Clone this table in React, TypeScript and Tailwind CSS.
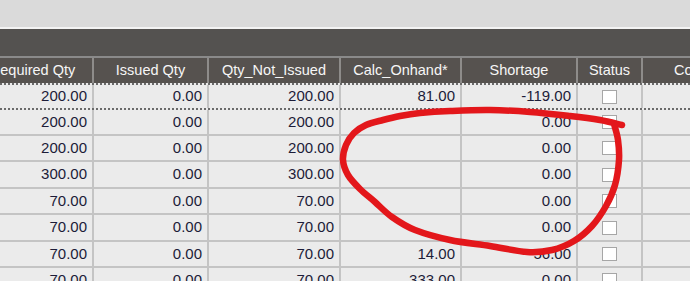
import React from "react";

type Row = {
  h: string;
  req: string;
  iss: string;
  notIss: string;
  calc: string;
  short: string;
  focus?: boolean;
};

const rows: Row[] = [
  { h: "h-[27px]", req: "200.00", iss: "0.00", notIss: "200.00", calc: "81.00", short: "-119.00", focus: true },
  { h: "h-[26px]", req: "200.00", iss: "0.00", notIss: "200.00", calc: "", short: "0.00" },
  { h: "h-[26px]", req: "200.00", iss: "0.00", notIss: "200.00", calc: "", short: "0.00" },
  { h: "h-[27px]", req: "300.00", iss: "0.00", notIss: "300.00", calc: "", short: "0.00" },
  { h: "h-[26px]", req: "70.00", iss: "0.00", notIss: "70.00", calc: "", short: "0.00" },
  { h: "h-[27px]", req: "70.00", iss: "0.00", notIss: "70.00", calc: "", short: "0.00" },
  { h: "h-[26px]", req: "70.00", iss: "0.00", notIss: "70.00", calc: "14.00", short: "56.00" },
  { h: "h-[26px]", req: "70.00", iss: "0.00", notIss: "70.00", calc: "333.00", short: "0.00" },
];

const widths = ["w-[121px]", "w-[115px]", "w-[132px]", "w-[121px]", "w-[116px]", "w-[65px]", "w-[139px]"];

const pts: [number, number][] = [
  [622, 125], [600, 120], [570, 116], [530, 112], [490, 110], [450, 111], [420, 113],
  [400, 116], [383, 120], [366, 125], [354, 133], [346, 145], [343, 160], [348, 175],
  [360, 189], [375, 202], [392, 217], [415, 230], [450, 240], [490, 246], [527, 252],
  [552, 250], [574, 241], [592, 226], [606, 206], [615, 185], [619, 160], [618, 140], [614, 124],
];

function smoothPath(p: [number, number][]): string {
  let d = `M ${p[0][0]} ${p[0][1]}`;
  for (let i = 0; i < p.length - 1; i++) {
    const p0 = p[i - 1] || p[i];
    const p1 = p[i];
    const p2 = p[i + 1];
    const p3 = p[i + 2] || p2;
    const c1x = p1[0] + (p2[0] - p0[0]) / 6;
    const c1y = p1[1] + (p2[1] - p0[1]) / 6;
    const c2x = p2[0] - (p3[0] - p1[0]) / 6;
    const c2y = p2[1] - (p3[1] - p1[1]) / 6;
    d += ` C ${c1x.toFixed(1)} ${c1y.toFixed(1)} ${c2x.toFixed(1)} ${c2y.toFixed(1)} ${p2[0]} ${p2[1]}`;
  }
  return d;
}

function NumCell({ w, v }: { w: string; v: string }) {
  return (
    <div className={`${w} shrink-0 h-full flex items-center justify-end pr-[5px] border-r-2 border-[#c4c4c4]`}>
      {v}
    </div>
  );
}

export default function App() {
  const headers = ["Required Qty", "Issued Qty", "Qty_Not_Issued", "Calc_Onhand*", "Shortage", "Status", "Component"];
  return (
    <div
      className="relative w-[690px] h-[281px] overflow-hidden bg-[#dadada]"
      style={{ fontFamily: '"Liberation Sans", Arial, sans-serif' }}
    >
      <div className="h-[27px] bg-[#dadada]" />
      <div className="h-[2px] bg-[#f3f3f3]" />
      <div className="h-[27px] bg-[#545250]" />
      <div className="h-[2px] bg-[#8a8a8a]" />
      <div className="-ml-[27px] flex h-[25px] bg-[#56524f] text-[14.5px] text-[#f6f6f6]">
        {headers.map((h, i) => (
          <div
            key={h}
            className={`${widths[i]} shrink-0 h-full flex items-center justify-center whitespace-nowrap overflow-hidden border-r-2 border-[#8e8c8a]`}
          >
            {h}
          </div>
        ))}
      </div>
      <div className="-ml-[27px] bg-[#ebebeb] text-[15px] text-[#1c1c38]">
        {rows.map((r, i) => (
          <div
            key={i}
            className={
              r.focus
                ? `${r.h} flex border-y-2 border-dotted border-[#6a6a6a]`
                : `${r.h} flex border-b-2 border-[#c4c4c4]`
            }
          >
            <NumCell w={widths[0]} v={r.req} />
            <NumCell w={widths[1]} v={r.iss} />
            <NumCell w={widths[2]} v={r.notIss} />
            <NumCell w={widths[3]} v={r.calc} />
            <NumCell w={widths[4]} v={r.short} />
            <div className={`${widths[5]} shrink-0 h-full flex items-center justify-center border-r-2 border-[#c4c4c4]`}>
              <div className="w-[15px] h-[14px] bg-white border border-[#a6a6a6]" />
            </div>
            <div className={`${widths[6]} shrink-0 h-full`} />
          </div>
        ))}
      </div>
      <svg
        className="absolute left-0 top-0 pointer-events-none"
        width={690}
        height={281}
        viewBox="0 0 690 281"
      >
        <path
          d={smoothPath(pts)}
          fill="none"
          stroke="#e3171b"
          strokeWidth={6.5}
          strokeLinecap="round"
          strokeLinejoin="round"
        />
      </svg>
    </div>
  );
}
